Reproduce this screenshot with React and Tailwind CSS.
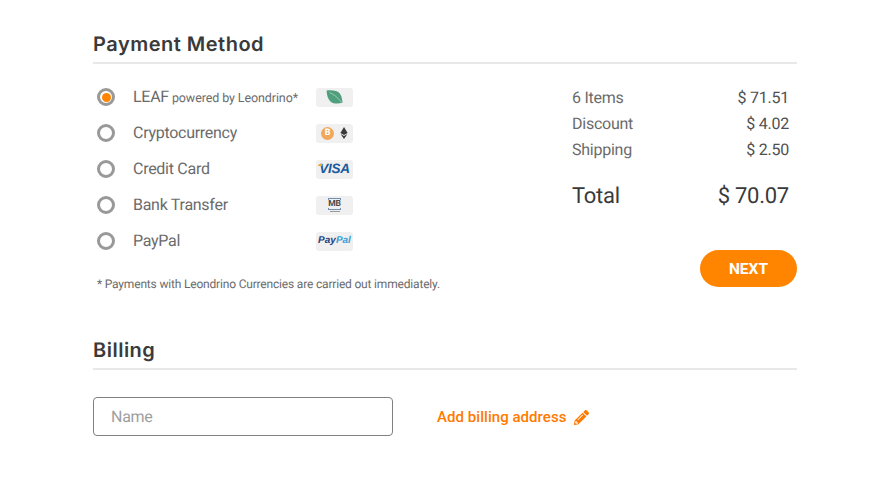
import { FaPencilAlt } from 'react-icons/fa';

const Leaf = () => (
  <svg width="17" height="14" viewBox="0 0 17 14">
    <path d="M0.6 0.6C5 -0.2 11 0.2 13.6 3.2C15 4.8 16 7.4 16.6 12.6C12.5 14 7.5 14 4.4 11.4C1.8 9.2 0.8 4.8 0.6 0.6Z" fill="#4f9f7c" />
    <path d="M3.5 2.6C7.5 4 11.5 7.4 15.4 12" stroke="#cfe5da" strokeWidth="0.6" fill="none" />
  </svg>
);

const Crypto = () => (
  <div className="flex items-center gap-[6px]">
    <div className="w-[13px] h-[13px] rounded-full bg-[#f0a85c] text-white text-[9px] font-bold leading-[13px] text-center">B</div>
    <svg width="8" height="12" viewBox="0 0 8 12">
      <path d="M4 0L7.6 6L4 8L0.4 6Z" fill="#3a3a3a" />
      <path d="M0.6 7L4 9L7.4 7L4 12Z" fill="#3a3a3a" />
    </svg>
  </div>
);

const Visa = () => (
  <span className="relative text-[13.5px] leading-none font-extrabold italic text-[#1a5a9e] tracking-[-0.3px] font-['Liberation_Sans',sans-serif]">
    VISA
    <span className="absolute left-[-1px] top-[2px] w-[4px] h-[2px] bg-[#eda52f] rounded-tl-sm" />
  </span>
);

const Multibanco = () => (
  <div className="flex flex-col items-center w-[13px]">
    <div className="w-full h-[2px] border-x border-t border-[#6f8fb5]" />
    <span className="text-[8.5px] leading-[8px] font-bold text-[#4a4a4a] tracking-[-0.3px]">MB</span>
    <div className="w-full h-[2px] border-x border-b border-[#6f8fb5]" />
    <div className="w-[10px] h-px mt-px bg-[#9a9a9a]" />
  </div>
);

const PayPal = () => (
  <span className="text-[10px] leading-none font-extrabold italic text-[#26427e] font-['Liberation_Sans',sans-serif]">
    Pay<span className="text-[#3b9fd8]">Pal</span>
  </span>
);

const methods = [
  { label: 'LEAF', extra: 'powered by Leondrino*', logo: <Leaf />, checked: true },
  { label: 'Cryptocurrency', logo: <Crypto /> },
  { label: 'Credit Card', logo: <Visa /> },
  { label: 'Bank Transfer', logo: <Multibanco /> },
  { label: 'PayPal', logo: <PayPal /> },
];

const summary = [
  ['6 Items', '$ 71.51'],
  ['Discount', '$ 4.02'],
  ['Shipping', '$ 2.50'],
];

const Heading = ({ children }) => (
  <div className="h-[32px] border-b-2 border-[#e8e8e8]">
    <h2 className="text-[20px] leading-[25px] font-semibold text-[#3a3a3a] font-['Inter',sans-serif] tracking-[0.5px]">{children}</h2>
  </div>
);

export default function App() {
  return (
    <div className="w-[890px] h-[479px] bg-white px-[93px] pt-[32px] overflow-hidden font-['Roboto',sans-serif] [text-rendering:geometricPrecision]">
      <Heading>Payment Method</Heading>
      <div className="flex justify-between">
        <div className="pl-[4px] pt-[15px]">
          {methods.map((m) => (
            <div key={m.label} className="h-[36px] flex items-center">
              <div className="w-[18px] h-[18px] rounded-full border-[3px] border-[#999999] flex items-center justify-center">
                {m.checked && <div className="w-[9px] h-[9px] rounded-full bg-[#ff8500]" />}
              </div>
              <div className="w-[183px] ml-[18px] text-[16px] tracking-[-0.28px] text-[#6b6b6b] whitespace-nowrap">
                {m.label}
                {m.extra && <span className="text-[12.5px] tracking-[-0.1px]"> {m.extra}</span>}
              </div>
              <div className="w-[37px] h-[19px] rounded-[3px] bg-[#f0f0f0] flex items-center justify-center">{m.logo}</div>
            </div>
          ))}
          <p className="mt-[17px] text-[12px] tracking-[-0.18px] leading-[16px] text-[#6b6b6b]">* Payments with Leondrino Currencies are carried out immediately.</p>
        </div>
        <div className="w-[225px] pt-[21px] flex flex-col">
          <div className="pr-[8px] tracking-[-0.25px]">
            {summary.map(([k, v]) => (
              <div key={k} className="h-[26px] flex items-center justify-between text-[16px] text-[#6b6b6b]">
                <span>{k}</span>
                <span className="text-[#505050]">{v}</span>
              </div>
            ))}
            <div className="mt-[18px] h-[30px] flex items-center justify-between text-[22px] text-[#3a3a3a]">
              <span>Total</span>
              <span>$ 70.07</span>
            </div>
          </div>
          <button className="mt-[39px] self-end w-[97px] h-[37px] pt-[2px] rounded-full bg-[#ff8500] text-white text-[15.5px] font-bold">NEXT</button>
        </div>
      </div>
      <div className="mt-[46px]">
        <Heading>Billing</Heading>
      </div>
      <div className="mt-[27px] flex items-center">
        <div className="w-[299.5px] h-[39px] rounded-[4px] border border-[#808080] pl-[17px] flex items-center text-[16px] tracking-[-0.28px] text-[#9e9e9e]">Name</div>
        <button className="ml-[44.5px] pt-px flex items-center gap-[8px] text-[15px] tracking-[0.05px] font-medium text-[#ff7a00]">
          Add billing address
          <FaPencilAlt size={15} />
        </button>
      </div>
    </div>
  );
}
